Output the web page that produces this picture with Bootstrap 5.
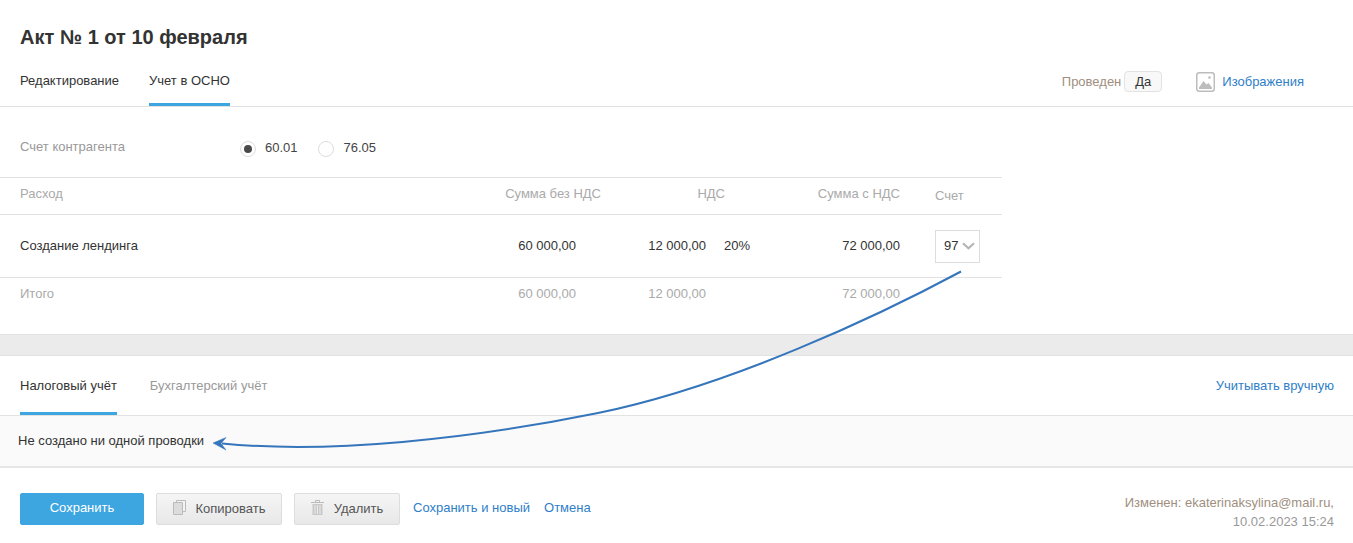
<!DOCTYPE html>
<html lang="ru">
<head>
<meta charset="utf-8">
<title>Акт № 1 от 10 февраля</title>
<link href="https://cdn.jsdelivr.net/npm/bootstrap@5.3.0/dist/css/bootstrap.min.css" rel="stylesheet">
<style>
html,body{height:543px;overflow:hidden}
body{font-family:"Liberation Sans",Arial,sans-serif;font-size:13px;color:#333;background:#fff;position:relative}
a{text-decoration:none;color:#2f80c8}
.doc-title{font-size:20px;font-weight:700;line-height:24px;margin:0;padding:25px 20px 0;color:#333}
.tabbar{align-items:stretch;gap:30px}
.topbar{height:58px;border-bottom:1px solid #e2e2e2;padding:0 49px 0 20px}
.topbar .tabbar{height:57px}
.tabitem{display:flex;align-items:center;color:#333;border-bottom:3px solid transparent;height:100%;padding:10px 0 0}
.tabitem.on{border-bottom-color:#3da5e0}
.tabitem.off{color:#999}
.state{color:#a08f80}
.state-pill{display:inline-block;border:1px solid #e2e2e2;border-radius:4px;background:#f8f8f8;color:#333;width:38px;height:21px;line-height:19px;text-align:center;margin-left:3px}
.pic-link{margin-left:34px;gap:7px}
.top-side{margin-top:8px}
.acct{height:70px;padding:12px 0 0 20px;color:#999}
.acct-name{width:220px;margin-top:-2px}
.radio-dot{width:16px;height:16px;border-radius:50%;border:1px solid #ddd;background:#fff;margin:2px 9px 0 0;display:flex;align-items:center;justify-content:center}
.radio-dot.sel::after{content:"";width:8px;height:8px;border-radius:50%;background:#4a4a4a}
.radio-dot.plain{margin-right:10px}
.radio-txt{color:#444;margin-right:20px}
.ledger{width:1002px;table-layout:fixed;margin:0;border-collapse:collapse;--bs-table-bg:transparent}
.ledger th,.ledger td{padding:0;border-bottom:1px solid #e2e2e2;vertical-align:middle;font-weight:400}
.ledger thead th{height:37px;color:#aaa;border-top:1px solid #e2e2e2;padding-bottom:4px}
.ledger thead th.c-acc{padding-bottom:0}
.ledger tbody td{height:63px;color:#333}
.ledger tfoot td{height:32px;color:#aaa;border-bottom:0}
.c-name{width:400px;padding-left:20px!important}
.c-sum{width:201px;text-align:right}
.c-vat{width:149px;text-align:right}
.c-tot{width:150px;text-align:right}
.c-acc{padding-left:35px!important}
.pad25{padding-right:25px!important}
.pct{display:inline-block;width:26px;margin-left:18px;text-align:left}
.acc-pick{width:45px;height:33px;border:1px solid #ddd;padding-left:8px;gap:4px}
.band{height:22px;margin-top:24px;background:#ebebeb;border-top:1px solid #e2e2e2;border-bottom:1px solid #e2e2e2}
.subbar{height:60px;border-bottom:1px solid #e2e2e2;padding:0 19px 0 20px}
.subbar .tabbar{height:59px;gap:33px}
.subbar .tabitem{padding:4px 0 0}
.manual-link{margin-top:1px}
.emptybox{height:52px;background:#fafafa;border-bottom:2px solid #e6e6e6;padding:0 18px;display:flex;align-items:center}
.foot{padding:25px 19px 0 20px}
.act-btn{height:32px;border-radius:2px;font-size:13px;line-height:30px;padding:0;display:inline-flex;align-items:center;justify-content:center;--bs-btn-font-size:13px}
.act-save{width:124px;background:#3da5e0;border:1px solid #3da5e0;color:#fff;margin-right:12px;padding-bottom:2px}
.act-gray{background:linear-gradient(#f5f5f5,#e8e8e8);border:1px solid #ddd;color:#555;gap:10px;margin-right:12px}
.act-gray svg{margin-bottom:2px}
.act-copy{width:126px}
.act-del{width:106px;margin-right:13px}
.foot-link{margin:0 14px 2px 0}
.foot-cancel{margin-bottom:2px}
.stamp{text-align:right;color:#a08f80;line-height:19px}
.stamp span{color:#999}
.arrow-layer{position:absolute;left:0;top:0;pointer-events:none}
</style>
</head>
<body>
<h1 class="doc-title">Акт № 1 от 10 февраля</h1>
<div class="topbar d-flex justify-content-between align-items-center">
  <nav class="tabbar d-flex">
    <a class="tabitem" href="#">Редактирование</a>
    <a class="tabitem on" href="#">Учет в ОСНО</a>
  </nav>
  <div class="top-side d-flex align-items-center">
    <span class="state">Проведен</span><span class="state-pill">Да</span>
    <a class="pic-link d-flex align-items-center" href="#">
      <svg width="19" height="20" viewBox="0 0 19 20"><rect x=".75" y=".75" width="17.500" height="18.500" rx="2.500" fill="#fff" stroke="#bdbdbd" stroke-width="1.500"/><path d="M3 17v-1.500L7.500 9l3 3.500 2-1.500 3.500 4.500V17z" fill="#bdbdbd"/><circle cx="13.500" cy="5.500" r="1.300" fill="#bdbdbd"/></svg>
      <span>Изображения</span>
    </a>
  </div>
</div>
<div class="acct d-flex align-items-center">
  <div class="acct-name">Счет контрагента</div>
  <span class="radio-dot sel"></span><span class="radio-txt">60.01</span>
  <span class="radio-dot plain"></span><span class="radio-txt">76.05</span>
</div>
<table class="table ledger">
  <thead>
    <tr><th class="c-name">Расход</th><th class="c-sum">Сумма без НДС</th><th class="c-vat pad25">НДС</th><th class="c-tot">Сумма с НДС</th><th class="c-acc">Счет</th></tr>
  </thead>
  <tbody>
    <tr>
      <td class="c-name">Создание лендинга</td>
      <td class="c-sum pad25">60 000,00</td>
      <td class="c-vat">12 000,00<span class="pct">20%</span></td>
      <td class="c-tot">72 000,00</td>
      <td class="c-acc"><div class="acc-pick d-flex align-items-center">97<svg width="13" height="8" viewBox="0 0 13 8"><path d="M1 1.200l5.500 5 5.500-5" fill="none" stroke="#b5b5b5" stroke-width="2.200"/></svg></div></td>
    </tr>
  </tbody>
  <tfoot>
    <tr>
      <td class="c-name">Итого</td>
      <td class="c-sum pad25">60 000,00</td>
      <td class="c-vat">12 000,00<span class="pct"></span></td>
      <td class="c-tot">72 000,00</td>
      <td></td>
    </tr>
  </tfoot>
</table>
<div class="band"></div>
<div class="subbar d-flex justify-content-between align-items-center">
  <nav class="tabbar d-flex">
    <a class="tabitem on" href="#">Налоговый учёт</a>
    <a class="tabitem off" href="#">Бухгалтерский учёт</a>
  </nav>
  <a class="manual-link" href="#">Учитывать вручную</a>
</div>
<div class="emptybox">Не создано ни одной проводки</div>
<div class="foot d-flex justify-content-between align-items-start">
  <div class="d-flex align-items-center">
    <button class="btn act-btn act-save" type="button">Сохранить</button>
    <button class="btn act-btn act-gray act-copy" type="button">
      <svg width="13" height="15" viewBox="0 0 13 15"><path d="M3.500.5h9v11h-9z" fill="#f4f4f4" stroke="#bbb"/><path d="M.5 2.500h9v12h-9z" fill="#dcdcdc" stroke="#bbb"/></svg>
      Копировать</button>
    <button class="btn act-btn act-gray act-del" type="button">
      <svg width="13" height="15" viewBox="0 0 13 15"><path d="M0 2.500h13M4.500 2V.5h4V2" fill="none" stroke="#bbb"/><path d="M1.500 4h10v11h-10z" fill="#c8c8c8"/><path d="M4 5v9M6.500 5v9M9 5v9" stroke="#ececec"/></svg>
      Удалить</button>
    <a class="foot-link" href="#">Сохранить и новый</a>
    <a class="foot-cancel" href="#">Отмена</a>
  </div>
  <div class="stamp">Изменен: ekaterinaksylina@mail.ru,<br><span>10.02.2023 15:24</span></div>
</div>
<svg class="arrow-layer" width="1353" height="543" viewBox="0 0 1353 543">
  <path d="M961 271.500C880 315 730 386 598 413C470 439 330 454 222 443.500" fill="none" stroke="#3575bb" stroke-width="2"/>
  <path d="M213 443 226 437.500 221 443.500 226 450z" fill="#3575bb" stroke="#3575bb" stroke-width=".5"/>
</svg>
<script src="https://cdn.jsdelivr.net/npm/bootstrap@5.3.0/dist/js/bootstrap.bundle.min.js"></script>
</body>
</html>
